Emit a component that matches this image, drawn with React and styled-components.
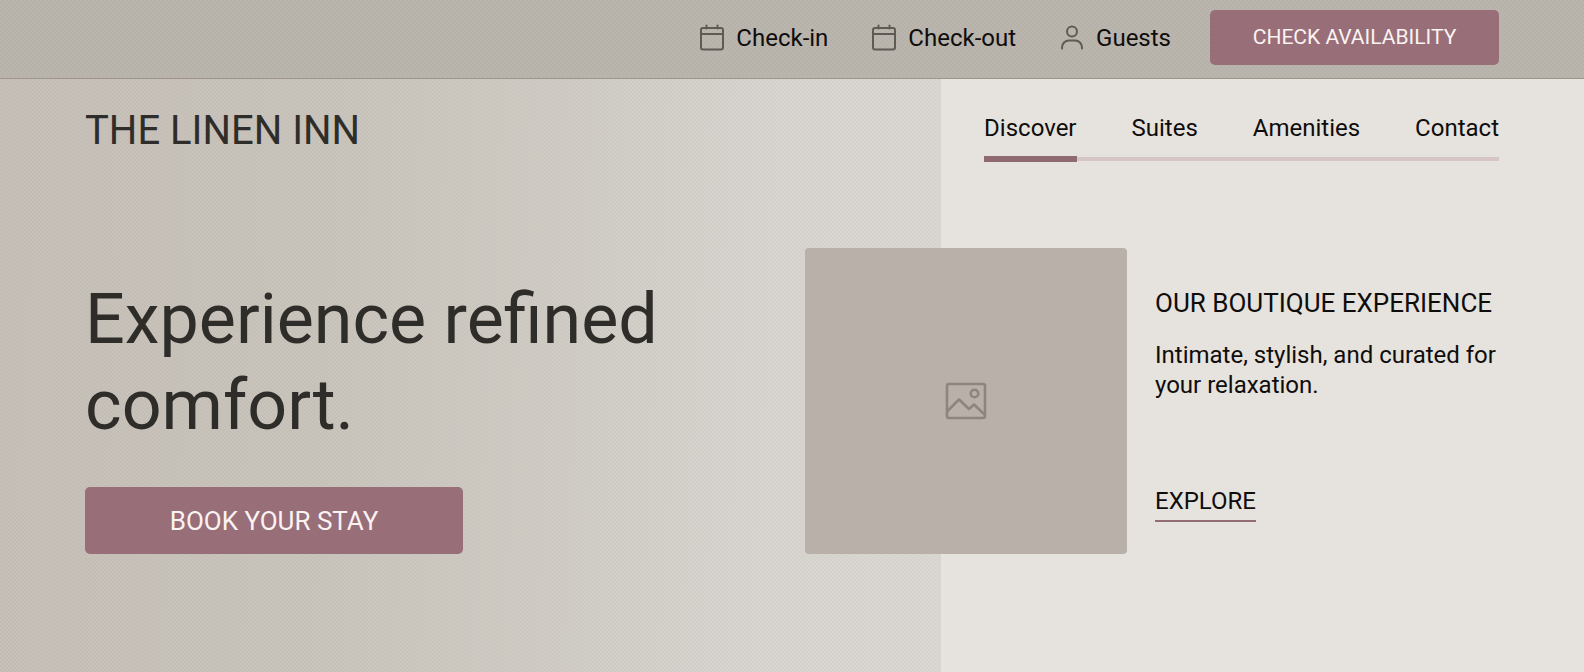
import React, { useState } from "react";
import styled, { createGlobalStyle } from "styled-components";

const links = ["Discover", "Suites", "Amenities", "Contact"];

function CalendarIcon() {
  return (
    <svg width="24" height="28" viewBox="0 0 24 28" fill="none" stroke="currentColor" strokeWidth="2" strokeLinecap="round">
      <rect x="1" y="4" width="22" height="21.500" rx="2" />
      <path d="M6.500 1.500v3M17.500 1.500v3M1 10h22" />
    </svg>
  );
}

function GuestIcon() {
  return (
    <svg width="24" height="28" viewBox="0 0 24 28" fill="none" stroke="currentColor" strokeWidth="2" strokeLinecap="round">
      <circle cx="12" cy="7.500" r="5" />
      <path d="M2 24.500v-1a7 7 0 0 1 7-7h6a7 7 0 0 1 7 7v1" />
    </svg>
  );
}

function PictureIcon() {
  return (
    <svg width="42" height="38" viewBox="0 0 42 38" fill="none" stroke="currentColor" strokeWidth="2.6" strokeLinejoin="round">
      <rect x="2" y="2" width="38" height="34" rx="2" />
      <circle cx="29.500" cy="11.500" r="3.800" />
      <path d="M2 29.500l12-12 10 9.500 5-4.500 11 10.500" />
    </svg>
  );
}

export default function App() {
  const [current, setCurrent] = useState("Discover");

  return (
    <Page>
      <GlobalStyle />
      <BookingBar>
        <BookingFields>
          <BookingField type="button">
            <CalendarIcon />
            Check-in
          </BookingField>
          <BookingField type="button">
            <CalendarIcon />
            Check-out
          </BookingField>
          <BookingField type="button">
            <GuestIcon />
            Guests
          </BookingField>
        </BookingFields>
        <CheckButton type="button">CHECK AVAILABILITY</CheckButton>
      </BookingBar>
      <Main>
        <Header>
          <Logo href="#home">THE LINEN INN</Logo>
          <Nav>
            {links.map((link) => (
              <NavLink
                key={link}
                href={`#${link.toLowerCase()}`}
                $active={link === current}
                onClick={() => setCurrent(link)}
              >
                {link}
              </NavLink>
            ))}
          </Nav>
        </Header>
        <Hero>
          <Intro>
            <h1>
              Experience refined
              <br />
              comfort.
            </h1>
            <BookButton type="button">BOOK YOUR STAY</BookButton>
          </Intro>
          <Picture role="img" aria-label="Suite preview">
            <PictureIcon />
          </Picture>
          <About>
            <h2>OUR BOUTIQUE EXPERIENCE</h2>
            <p>
              Intimate, stylish, and curated for
              <br />
              your relaxation.
            </p>
            <ExploreLink href="#explore">EXPLORE</ExploreLink>
          </About>
        </Hero>
      </Main>
    </Page>
  );
}

// faint linen weave, laid over the bar and the left panel
const weave = "conic-gradient(rgba(70, 60, 50, 0.03) 25%, transparent 0 50%, rgba(70, 60, 50, 0.03) 0 75%, transparent 0)";

const GlobalStyle = createGlobalStyle`
  * {
    box-sizing: border-box;
  }
  body {
    margin: 0;
    font-family: Roboto, "Liberation Sans", sans-serif;
    color: #0e0d0c;
  }
  h1, h2, p {
    margin: 0;
    font-weight: 400;
  }
  a {
    color: inherit;
    text-decoration: none;
  }
  button {
    font: inherit;
    border: none;
    cursor: pointer;
  }
`;

const Page = styled.div`
  min-height: 100vh;
  display: flex;
  flex-direction: column;
`;

const BookingBar = styled.div`
  display: flex;
  align-items: center;
  justify-content: flex-end;
  gap: 39px;
  height: 79px;
  padding: 0 85px 4px;
  background: ${weave} 0 0 / 4px 4px, #bab5ad;
  border-bottom: 1px solid #a0958d;
`;

const BookingFields = styled.div`
  display: flex;
  gap: 44px;
  padding-top: 2px;
`;

const BookingField = styled.button`
  display: flex;
  align-items: center;
  gap: 12px;
  padding: 0;
  background: none;
  color: #0e0d0c;
  font-size: 24px;
  line-height: 28px;
  svg {
    color: #5f5a54;
  }
`;

const SolidButton = styled.button`
  border-radius: 5px;
  background: #986e78;
  color: #fbf3f2;
`;

const CheckButton = styled(SolidButton)`
  width: 289px;
  height: 55px;
  font-size: 21px;
`;

const Main = styled.main`
  flex: 1;
  display: grid;
  grid-template-rows: auto 1fr;
  padding: 0 85px;
  background:
    linear-gradient(#e6e2dd, #e6e2dd) right / 40.6% 100% no-repeat,
    ${weave} 0 0 / 4px 4px,
    linear-gradient(93deg, #c6c0b8 0%, #c9c4bc 21%, #d1cdc6 37%, #d8d5d0 48%, #dbd8d3 60%);
`;

const Header = styled.header`
  display: flex;
  justify-content: space-between;
  align-items: flex-start;
  padding-top: 27px;
`;

const Logo = styled.a`
  font-size: 40px;
  line-height: 50px;
  color: #2f2d2a;
`;

const Nav = styled.nav`
  display: flex;
  gap: 55px;
  padding-top: 8px;
  background: linear-gradient(#d5c6c4, #d5c6c4) left 0 bottom 1px / 100% 4px no-repeat;
`;

const NavLink = styled.a`
  padding-bottom: 14px;
  font-size: 24px;
  line-height: 28px;
  border-bottom: 6px solid ${(props) => (props.$active ? "#906a73" : "transparent")};
`;

const Hero = styled.section`
  display: flex;
  align-items: flex-start;
  padding: 86px 0 60px;
`;

const Intro = styled.div`
  flex: 1;
  padding-top: 28px;
  h1 {
    font-size: 70px;
    line-height: 86px;
    color: #2f2d2a;
  }
`;

const BookButton = styled(SolidButton)`
  width: 378px;
  height: 67px;
  margin-top: 39px;
  font-size: 26px;
`;

const Picture = styled.div`
  display: flex;
  align-items: center;
  justify-content: center;
  width: 322px;
  height: 306px;
  border-radius: 4px;
  background: #b8b0a9;
  color: #8d8580;
`;

const About = styled.div`
  width: 372px;
  padding: 40px 0 0 28px;
  font-size: 24px;
  line-height: 30px;
  h2 {
    font-size: 26px;
    line-height: 30px;
    margin-bottom: 22px;
  }
`;

const ExploreLink = styled.a`
  display: inline-block;
  margin-top: 86px;
  padding-bottom: 4px;
  border-bottom: 2px solid #936c75;
`;
